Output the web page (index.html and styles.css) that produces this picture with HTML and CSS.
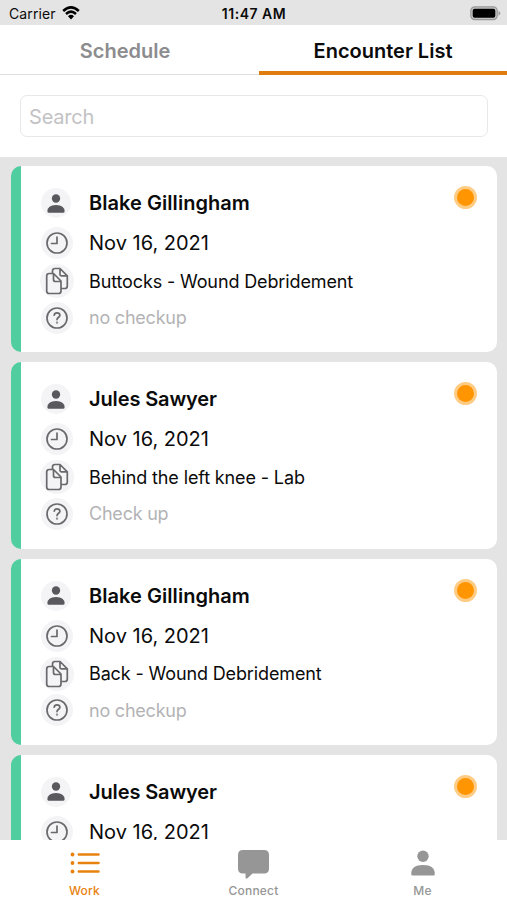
FILE: index.html
```html
<!DOCTYPE html>
<html lang="en">
<head>
<meta charset="utf-8">
<title>Encounter List</title>
<link rel="stylesheet" href="styles.css">
</head>
<body>
<svg class="defs" aria-hidden="true">
  <symbol id="person" viewBox="0 0 24 26"><circle cx="12" cy="6.2" r="5.7"/><path d="M0.2 24Q0.2 15 12 15T23.8 24Q23.8 25.5 22.3 25.5H1.7Q.2 25.5.2 24Z"/></symbol>
  <symbol id="clock" viewBox="0 0 22 22"><circle cx="11" cy="11" r="10"/><path d="M11 5v6.5H5.5"/></symbol>
  <symbol id="docs" viewBox="0 0 24 28"><path d="M7.500 6.500V4Q7.500 1.500 10 1.500H15L22.300 8.800V19Q22.300 21.500 19.800 21.500H16.500M15 1.500V7.500Q15 8.800 16.300 8.800H22.300M4.200 6.500H8.500L16 14V24Q16 26.500 13.500 26.500H4.200Q1.700 26.500 1.700 24V9Q1.700 6.500 4.200 6.500ZM8.500 6.500V12.500Q8.500 14.500 10.500 14.500H16"/></symbol>
  <symbol id="help" viewBox="0 0 22 22"><circle cx="11" cy="11" r="10"/><path d="M8.200 8.200Q8.400 5.800 11.100 5.800T13.900 8.200C13.900 10.200 11 10.400 11 12.600"/><circle class="dot" cx="11" cy="15.700" r=".3"/></symbol>
</svg>
<div class="app">
  <header class="status">
    <div class="carrier"><span>Carrier</span>
      <svg class="wifi" viewBox="0 0 18 14"><path d="M1.200 5Q9-2.300 16.800 5M4 8Q9 3.300 14 8"/><path class="solid" d="M6 10.200Q9 7.300 12 10.200L9 13.500Z"/></svg>
    </div>
    <div class="time">11:47 AM</div>
    <div class="power"><svg class="battery" viewBox="0 0 31 15"><rect class="shell" x=".8" y=".8" width="26.400" height="12.900" rx="4"/><rect x="2.700" y="2.700" width="22.600" height="9.100" rx="2"/><path class="cap" d="M28.500 4.800Q32 7.200 28.500 9.700Z"/></svg></div>
  </header>
  <nav class="tabs">
    <div class="tab"><span>Schedule</span></div>
    <div class="tab active"><span>Encounter List</span></div>
  </nav>
  <div class="search"><div class="field"><span>Search</span></div></div>
  <main class="list">
    <article class="card">
      <div class="row name"><i><svg><use href="#person"/></svg></i><span class="long">Blake Gillingham</span></div>
      <div class="row date"><i><svg><use href="#clock"/></svg></i><span>Nov 16, 2021</span></div>
      <div class="row kind"><i><svg><use href="#docs"/></svg></i><span>Buttocks - Wound Debridement</span></div>
      <div class="row note"><i><svg><use href="#help"/></svg></i><span>no checkup</span></div>
      <b class="badge"></b>
    </article>
    <article class="card">
      <div class="row name"><i><svg><use href="#person"/></svg></i><span>Jules Sawyer</span></div>
      <div class="row date"><i><svg><use href="#clock"/></svg></i><span>Nov 16, 2021</span></div>
      <div class="row kind"><i><svg><use href="#docs"/></svg></i><span>Behind the left knee - Lab</span></div>
      <div class="row note"><i><svg><use href="#help"/></svg></i><span>Check up</span></div>
      <b class="badge"></b>
    </article>
    <article class="card">
      <div class="row name"><i><svg><use href="#person"/></svg></i><span class="long">Blake Gillingham</span></div>
      <div class="row date"><i><svg><use href="#clock"/></svg></i><span>Nov 16, 2021</span></div>
      <div class="row kind"><i><svg><use href="#docs"/></svg></i><span>Back - Wound Debridement</span></div>
      <div class="row note"><i><svg><use href="#help"/></svg></i><span>no checkup</span></div>
      <b class="badge"></b>
    </article>
    <article class="card">
      <div class="row name"><i><svg><use href="#person"/></svg></i><span>Jules Sawyer</span></div>
      <div class="row date"><i><svg><use href="#clock"/></svg></i><span>Nov 16, 2021</span></div>
      <b class="badge"></b>
    </article>
  </main>
  <footer class="bar">
    <div class="item on"><svg class="work" viewBox="0 0 30 22"><path d="M8.800 2.500H28.500M8.800 11H28.500M8.800 19.500H28.500"/><circle cx="2.500" cy="2.500" r="1.900"/><circle cx="2.500" cy="11" r="1.900"/><circle cx="2.500" cy="19.500" r="1.900"/></svg><span>Work</span></div>
    <div class="item"><svg class="chat" viewBox="0 0 31 29"><path d="M5 0H26Q31 0 31 5V18.500Q31 23.500 26 23.500H14.500L9.500 28.300Q7.500 29.500 7.500 27V23.500H5Q0 23.500 0 18.500V5Q0 0 5 0Z"/></svg><span>Connect</span></div>
    <div class="item"><svg class="me"><use href="#person"/></svg><span>Me</span></div>
  </footer>
</div>
</body>
</html>
```
FILE: styles.css
```css
* { box-sizing: border-box; }
body { margin: 0; font-family: Inter, "Liberation Sans", sans-serif; color: #0b0b0b; background: #fff; }
.defs { position: absolute; width: 0; height: 0; }
svg { display: block; }
span { white-space: nowrap; }
.app { width: 507px; height: 900px; display: flex; flex-direction: column; overflow: hidden; }
.status { height: 25px; flex: none; background: #e4e4e4; display: grid; grid-template-columns: 1fr auto 1fr; align-items: center; padding: 2px 6px 0 9px; font-size: 14px; }
.carrier { display: flex; align-items: center; gap: 6px; letter-spacing: .1px; }
.wifi { width: 18px; height: 14px; margin-top: -2px; fill: none; stroke: #000; stroke-width: 2.5; }
.wifi .solid { fill: #000; stroke: none; }
.time { font-weight: 600; font-size: 14px; letter-spacing: .5px; margin-left: -2px; }
.power { justify-self: end; }
.battery { width: 31px; height: 15px; margin-top: -1px; }
.shell { fill: #c4c4c4; stroke: #999; stroke-width: 1.2; }
.cap { fill: #999; }
.tabs { height: 50px; flex: none; display: grid; grid-template-columns: 259px 248px; }
.tab { display: flex; align-items: center; justify-content: center; font-size: 20px; font-weight: 600; color: #8c8c8f; border-bottom: 1px solid #dedede; padding-top: 2px; }
.tab:first-child { padding-right: 9px; }
.tab.active { color: #0b0b0b; border-bottom: 4px solid #df7c10; padding-top: 5px; }
.search { height: 82px; flex: none; padding: 20px 19px 19px 20px; }
.field { height: 42px; border: 1px solid #e8e8ea; border-radius: 7px; display: flex; align-items: center; padding: 2px 0 0 8px; font-size: 20px; letter-spacing: -.2px; color: #c2c2c4; }
.list { height: 683px; flex: none; background: #e4e4e4; padding: 9.200px 10px 0 10.500px; display: flex; flex-direction: column; gap: 10px; overflow: hidden; }
.card { position: relative; height: 186.250px; flex: none; border-radius: 10px; background: linear-gradient(90deg, #50cea0 10px, #fff 10px); padding: 17px 0 0 29px; }
.row { display: grid; grid-template-columns: 34px 1fr; column-gap: 15.500px; align-items: center; height: 40px; }
.row i { justify-self: center; width: 32px; height: 32px; border-radius: 50%; background: #f4f4f7; display: grid; place-items: center; }
.row svg { width: 22px; height: 22px; fill: none; stroke: #69696d; stroke-width: 1.7; stroke-linecap: round; stroke-linejoin: round; }
.name { font-size: 20px; font-weight: 600; letter-spacing: -.13px; }
.name .long { letter-spacing: .05px; }
.name i { width: 30px; height: 30px; margin-right: 1px; }
.name svg { width: 18px; height: 19px; fill: #58585d; stroke: none; }
.date { font-size: 20px; }
.kind { height: 36px; font-size: 18px; letter-spacing: -.13px; }
.kind i { width: 34px; height: 34px; }
.kind svg { width: 24px; height: 28px; }
.note { height: 37px; font-size: 18px; letter-spacing: -.22px; color: #b3b3b5; }
.badge { position: absolute; right: 20px; top: 20px; width: 23px; height: 23px; border-radius: 50%; background: #ff9500; border: 3px solid #ffcc85; }
.bar { height: 60px; flex: none; background: #fff; display: grid; grid-template-columns: repeat(3, 169px); }
.item { display: flex; flex-direction: column; align-items: center; justify-content: space-between; padding: 10px 0 2px; font-size: 12px; font-weight: 500; line-height: 15px; letter-spacing: .2px; color: #969696; fill: #969696; }
.on { color: #e8820e; fill: #e8820e; }
.work { width: 30px; height: 22px; margin-top: 2px; stroke: #e8820e; stroke-width: 2.5; stroke-linecap: round; }
.work circle { stroke: none; }
.chat { width: 31px; height: 29px; }
.me { width: 24px; height: 26px; }
```
